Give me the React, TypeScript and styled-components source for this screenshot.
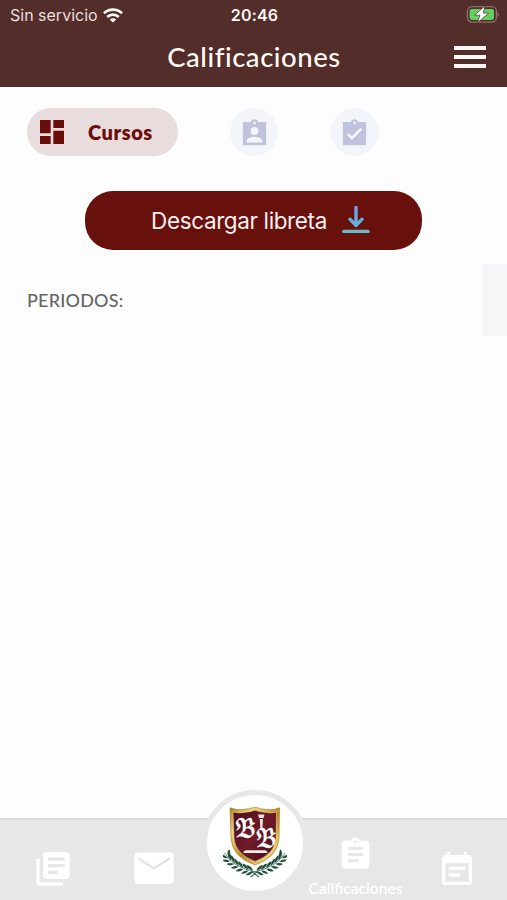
import React from "react";
import styled, { createGlobalStyle } from "styled-components";

const Global = createGlobalStyle`
  * { box-sizing: border-box; }
  body { margin: 0; background: #fdfdfd; font-family: Lato, "Open Sans", sans-serif; }
  button { font: inherit; border: 0; padding: 0; cursor: pointer; background: none; }
  svg { display: block; flex: none; }
`;

const Screen = styled.div`
  width: 100%;
  height: 900px;
  display: flex;
  flex-direction: column;
  overflow: hidden;
  background: #fdfdfd;
`;

const Header = styled.header`
  flex: none;
  height: 87px;
  background: #522d29;
  color: #fff8f4;
`;

const StatusBar = styled.div`
  height: 30px;
  display: grid;
  grid-template-columns: 1fr auto 1fr;
  align-items: center;
  padding: 0 8px 0 10px;
  font-family: Inter, sans-serif;
`;

const Carrier = styled.div`
  display: flex;
  align-items: center;
  gap: 5px;
  font-size: 16px;
  letter-spacing: 0;
  color: #eadfdc;
`;

const Clock = styled.div`
  font-size: 16px;
  font-weight: 600;
  letter-spacing: 0.2px;
`;

const BatterySlot = styled.div`
  display: flex;
  justify-content: flex-end;
`;

const TitleBar = styled.div`
  height: 57px;
  display: grid;
  grid-template-columns: 1fr auto 1fr;
  align-items: center;
  padding: 0 21px 3px;
`;

const Title = styled.h1`
  grid-column: 2;
  margin: 0;
  padding-left: 1px;
  font-size: 27.5px;
  line-height: 34px;
  font-weight: 500;
  letter-spacing: 0.55px;
`;

const MenuButton = styled.button`
  justify-self: end;
  display: flex;
  flex-direction: column;
  gap: 5px;
`;

const MenuLine = styled.span`
  width: 32px;
  height: 4px;
  background: #fff8f6;
`;

const Main = styled.main`
  flex: 1;
  display: flex;
  flex-direction: column;
`;

const Tabs = styled.nav`
  display: flex;
  gap: 52.5px;
  padding: 21.4px 26.5px 0;
`;

const Tab = styled.button<{ $active?: boolean }>`
  width: ${(p) => (p.$active ? "151px" : "48px")};
  height: 48px;
  border-radius: 24px;
  display: flex;
  align-items: center;
  justify-content: ${(p) => (p.$active ? "flex-start" : "center")};
  gap: 20.5px;
  padding: ${(p) => (p.$active ? "0 0 0 9px" : "2px 0 0")};
  background: ${(p) => (p.$active ? "#e9dcdd" : "#f3f5fa")};
  color: ${(p) => (p.$active ? "#6a0d0b" : "#bfc3dc")};
`;

const TabLabel = styled.span`
  font-size: 20px;
  line-height: 24px;
  font-weight: 800;
  letter-spacing: 0.55px;
  padding-bottom: 1px;
`;

const Download = styled.button`
  align-self: center;
  width: 337px;
  height: 59px;
  margin-top: 34.6px;
  border-radius: 28px;
  display: flex;
  align-items: center;
  justify-content: center;
  gap: 15px;
  padding-left: 14px;
  background: #68110c;
  color: #fbeeee;
  font-family: Inter, sans-serif;
  font-size: 22.5px;
  letter-spacing: -0.38px;
`;

const Periods = styled.section`
  display: flex;
  justify-content: space-between;
  align-items: center;
  margin-top: 14px;
  padding-left: 27px;
`;

const PeriodsLabel = styled.h2`
  margin: 0;
  font-size: 18px;
  line-height: 22px;
  font-weight: 500;
  letter-spacing: 0.2px;
  color: #666;
`;

const PeriodSlot = styled.div`
  width: 25px;
  height: 72px;
  background: #f6f6f9;
`;

const BottomNav = styled.nav`
  flex: none;
  height: 82px;
  display: grid;
  grid-template-columns: repeat(5, minmax(0, 1fr));
  padding-left: 2px;
  border-top: 2px solid #dcdcdc;
  background: #e7e7e7;
  color: #fff;
`;

const NavItem = styled.button<{ $top: number }>`
  color: inherit;
  display: flex;
  flex-direction: column;
  align-items: center;
  justify-content: flex-start;
  padding-top: ${(p) => p.$top}px;
`;

const NavLabel = styled.span`
  margin-top: 6px;
  font-size: 15.5px;
  line-height: 18px;
  font-weight: 600;
  letter-spacing: 0;
`;

const Home = styled.button`
  justify-self: center;
  width: 106px;
  height: 106px;
  margin: -30px -3px 0;
  border: 5px solid #e7e7e7;
  border-radius: 50%;
  background: #fff;
  display: flex;
  justify-content: center;
  padding-top: 12px;
`;

const Icon = ({ d, size }: { d: string; size: number }) => (
  <svg width={size} height={size} viewBox="0 0 24 24" fill="currentColor">
    <path d={d} />
  </svg>
);

const clip = "M21 3h-6.18C14.4 1.84 13.3 1 12 1s-2.4.84-2.82 2H3v18h18V3zm-9-.2a1 1 0 1 1 0 2 1 1 0 0 1 0-2z";
const paths = {
  dashboard: "M3 13h8V3H3v10zm0 8h8v-6H3v6zm10 0h8V11h-8v10zm0-18v6h8V3h-8z",
  person: clip + "M12 7a3 3 0 1 1 0 6 3 3 0 0 1 0-6zm6 12H6v-1.4c0-2 4-3.1 6-3.1s6 1.1 6 3.1V19z",
  check: clip + "M10 17l-4-4 1.41-1.41L10 14.17l6.59-6.59L18 9l-8 8z",
  library:
    "M4 6H2v14c0 1.1.9 2 2 2h14v-2H4V6zm16-4H8c-1.1 0-2 .9-2 2v12c0 1.1.9 2 2 2h12c1.1 0 2-.9 2-2V4c0-1.1-.9-2-2-2zm-1 9H9V9h10v2zm-4 4H9v-2h6v2zm4-8H9V5h10v2z",
  assignment:
    "M19 3h-4.18C14.4 1.84 13.3 1 12 1s-2.4.84-2.82 2H5c-1.1 0-2 .9-2 2v14c0 1.1.9 2 2 2h14c1.1 0 2-.9 2-2V5c0-1.1-.9-2-2-2zm-7-.2a.9.9 0 1 1 0 1.8.9.9 0 0 1 0-1.8zM14 17H7v-2h7v2zm3-4H7v-2h10v2zm0-4H7V7h10v2z",
  event:
    "M17 10H7v2h10v-2zm2-7h-1V1h-2v2H8V1H6v2H5c-1.11 0-2 .9-2 2v14c0 1.1.89 2 2 2h14c1.1 0 2-.9 2-2V5c0-1.1-.9-2-2-2zm0 16H5V8h14v11zm-5-5H7v2h7v-2z",
};

const Wifi = () => (
  <svg width="20" height="15" viewBox="0 0 20 15" fill="none" stroke="#fffaf8" strokeWidth="2.7">
    <path d="M1 5.3C6 .5 14 .5 19 5.3" />
    <path d="M4.2 9c3.3-3.1 8.3-3.1 11.6 0" />
    <path d="M10 14.6 6.8 11.5c1.8-1.6 4.6-1.6 6.4 0z" fill="#fffaf8" stroke="none" />
  </svg>
);

const Battery = () => (
  <svg width="33" height="18" viewBox="0 0 33 18">
    <rect x="1.4" y=".7" width="29" height="15.4" rx="4.5" fill="none" stroke="#8d6f69" strokeWidth="1.3" />
    <path d="M31.400 6q1.400.8 1.400 2.400T31.400 10.800z" fill="#8d6f69" />
    <rect x="3.600" y="2.900" width="24.400" height="11" rx="2.400" fill="#5fd061" />
    <path d="M18.900-.2 8.600 9.200h5.300l-2.300 7.400L22.800 7.100h-5.500z" fill="#fff" stroke="#522d29" strokeWidth=".7" />
  </svg>
);

const DownloadIcon = () => (
  <svg width="28" height="28" viewBox="0 0 28 28" fill="none" strokeLinecap="round" strokeLinejoin="round">
    <defs>
      <linearGradient id="arrow" gradientUnits="userSpaceOnUse" x1="0" y1="0" x2="0" y2="28">
        <stop offset="0" stopColor="#7a9bea" />
        <stop offset="1" stopColor="#55bfd0" />
      </linearGradient>
    </defs>
    <path d="M14 1.500v18M8 13.300l6 6.100 6-6.100" stroke="url(#arrow)" strokeWidth="3.400" />
    <path d="M1.700 25.400h24.400" stroke="#62bcca" strokeWidth="3.200" />
  </svg>
);

const leaves = [
  [4, 48, 60], [5.5, 51.5, 45], [9, 54.5, 32], [13, 57.5, 24], [17.5, 60, 18], [22.5, 62, 12], [27, 63.3, 8],
];

const LaurelBranch = () => (
  <g fill="#214f3b">
    <path d="M1.500 46Q9 60 34 65.500" fill="none" stroke="#3c6650" strokeWidth=".8" />
    {leaves.map(([x, y, a]) => (
      <g key={x} transform={`translate(${x} ${y}) rotate(${a})`}>
        <path d="M3.200 0Q0-5.200-4-4.800-3.200-.8 3.200 0z" />
        <path d="M3.200 1Q-1 1-3.400 5.200 1.200 5.600 3.200 1z" />
      </g>
    ))}
  </g>
);

const Crest = () => (
  <svg width="64" height="76" viewBox="0 0 64 76">
    <defs>
      <linearGradient id="gold" x1="0" y1="0" x2="1" y2="1">
        <stop offset="0" stopColor="#ad7c20" />
        <stop offset=".25" stopColor="#f2d77c" />
        <stop offset=".55" stopColor="#bd8722" />
        <stop offset=".8" stopColor="#f0d071" />
        <stop offset="1" stopColor="#9c6d19" />
      </linearGradient>
      <linearGradient id="wine" x1="0" y1="0" x2="1" y2="1">
        <stop offset="0" stopColor="#4b101c" />
        <stop offset=".5" stopColor="#6e1a27" />
        <stop offset="1" stopColor="#3f0c17" />
      </linearGradient>
    </defs>
    <LaurelBranch />
    <g transform="translate(63.500 0) scale(-1 1)">
      <LaurelBranch />
    </g>
    <path d="M28 64l8 6M35.500 64l-8 6" stroke="#3c6650" strokeWidth="1.100" />
    <path
      d="M7 .8Q14 3.500 20 2.500 27 2 32 0q5 2 12 2.500 6 1 12.500-1.700L56 31Q55 50 32 58 9 50 8 31z"
      fill="url(#gold)"
      stroke="#a0711d"
      strokeWidth=".6"
    />
    <path
      d="M10 5Q16 6.500 21 5.500 27 5 32 3.200q5 1.800 11 2.300 5 1 10.500-.5L53 31Q52 47 32 54.500 12 47 11 31z"
      fill="url(#wine)"
      stroke="#f2e1a1"
      strokeWidth=".5"
    />
    <path d="M35 7.500h6.500l-1 3.500h-4.500zM36.800 12h3.200l-.6 11h-2z" fill="#ece3df" />
    <g
      fill="#fff"
      stroke="#fff"
      strokeWidth=".3"
      fontFamily="'DejaVu Math TeX Gyre', 'DejaVu Serif', serif"
      fontSize="24"
    >
      <text transform="translate(11.500 29.500) scale(.76 1)">𝕭</text>
      <text transform="translate(32.300 40) scale(.76 1)">𝕭</text>
    </g>
    <path d="M20.500 46q0-2.800 3-2.800h18q3 0 3 2.800z" fill="#f3ecea" />
  </svg>
);

const MailIcon = () => (
  <svg width="40" height="33" viewBox="0 0 40 33">
    <rect x=".3" y=".5" width="39.400" height="31.500" rx="4" fill="#fff" />
    <path d="M4.500 6.500 20 16.500l15.500-10" fill="none" stroke="#e2e2e2" strokeWidth="2.200" />
  </svg>
);

export default function App() {
  return (
    <Screen>
      <Global />
      <Header>
        <StatusBar>
          <Carrier>
            Sin servicio
            <Wifi />
          </Carrier>
          <Clock>20:46</Clock>
          <BatterySlot>
            <Battery />
          </BatterySlot>
        </StatusBar>
        <TitleBar>
          <Title>Calificaciones</Title>
          <MenuButton>
            <MenuLine />
            <MenuLine />
            <MenuLine />
          </MenuButton>
        </TitleBar>
      </Header>
      <Main>
        <Tabs>
          <Tab $active>
            <Icon d={paths.dashboard} size={32} />
            <TabLabel>Cursos</TabLabel>
          </Tab>
          <Tab>
            <Icon d={paths.person} size={31} />
          </Tab>
          <Tab>
            <Icon d={paths.check} size={31} />
          </Tab>
        </Tabs>
        <Download>
          Descargar libreta
          <DownloadIcon />
        </Download>
        <Periods>
          <PeriodsLabel>PERIODOS:</PeriodsLabel>
          <PeriodSlot />
        </Periods>
      </Main>
      <BottomNav>
        <NavItem $top={29}>
          <Icon d={paths.library} size={40} />
        </NavItem>
        <NavItem $top={32}>
          <MailIcon />
        </NavItem>
        <Home>
          <Crest />
        </Home>
        <NavItem $top={16}>
          <Icon d={paths.assignment} size={37} />
          <NavLabel>Calificaciones</NavLabel>
        </NavItem>
        <NavItem $top={30}>
          <Icon d={paths.event} size={40} />
        </NavItem>
      </BottomNav>
    </Screen>
  );
}
